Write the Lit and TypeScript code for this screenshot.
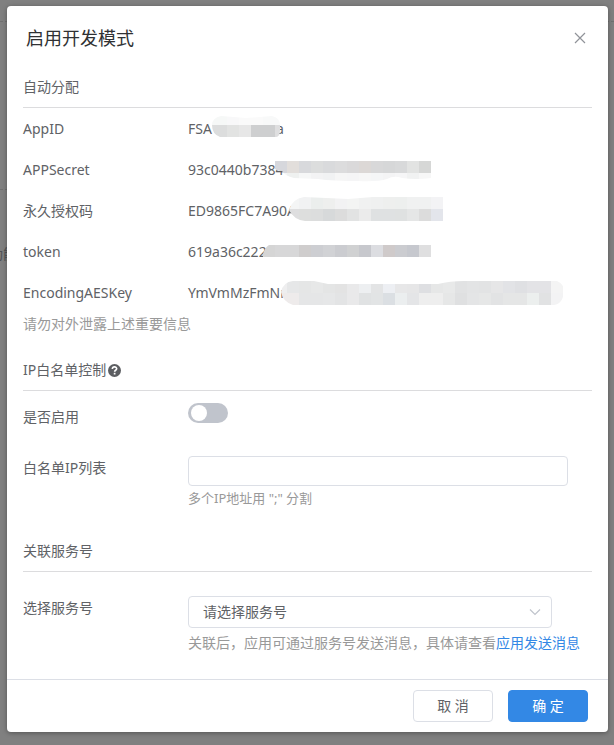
import { LitElement, html, css, svg } from "lit";
import { customElement, property, state } from "lit/decorators.js";

interface Mask {
  x: number;
  y: number;
  path: string;
  rows: string[][];
}

interface Credential {
  name: string;
  head: string;
  tail?: string;
  mask: Mask;
}

const CELL = 12;

const CREDENTIALS: Credential[] = [
  {
    name: "AppID",
    head: "FSA1",
    tail: "a",
    mask: {
      x: 15,
      y: 5,
      path: "M24 17Q24 10 33 8Q46 9 58 10L84 8Q92 10 92 17V22Q92 29 88 29H32Q24 26 24 17Z",
      rows: [
        ["#f6f8f7", "#f6f8f7", "#f8f8f9", "#fafafa", "#fafafa", "#f8f9f9", "#f8f9f9"],
        ["#dcdddd", "#dcdddd", "#e2e3e2", "#e7e7e7", "#cecfd0", "#cecfd0", "#dededf"],
      ],
    },
  },
  {
    name: "APPSecret",
    head: "93c0440b7384",
    mask: {
      x: 87,
      y: 12,
      path: "M87 12H243V29Q228 31 214 29Q206 26 199 30Q190 33 170 32Q145 32 130 30L106 29Q97 27 94 22Q87 22 86 18Z",
      rows: [
        ["#d6d7dc", "#e2dedb", "#d8d9dc", "#dcdddd", "#d9dadc", "#dcdcdd", "#dad9da", "#dcd8d6", "#d8d8d9", "#d6d7d8", "#d8d9da", "#e2e3e2", "#d6d7d6"],
        ["#f5f5f5", "#eff1f0", "#f6f7f7", "#f3f3f4", "#f1f2f3", "#f6f6f6", "#f5f5f6", "#f7f7f7", "#f5f6f7", "#f4f4f5", "#f6f6f7", "#f1f2f2", "#f7f7f7"],
      ],
    },
  },
  {
    name: "永久授权码",
    head: "ED9865FC7A90A",
    mask: {
      x: 99,
      y: 7,
      path: "M101 20Q104 9 116 7L160 9L185 7H255V31H117Q106 30 101 20Z",
      rows: [
        ["#f4f5f5", "#f1f2f3", "#ebeeed", "#eeefee", "#f2f2f3", "#f3f4f3", "#f0f1f1", "#eff0f0", "#eeefee", "#edefee", "#f0f1f1", "#f0f1f1", "#f3f3f5"],
        ["#dededf", "#dddedd", "#dcdddd", "#d7d9da", "#dcdcdc", "#e2e3e3", "#ebebeb", "#dfe1e2", "#dfe1e2", "#dfe1e1", "#e5e6e6", "#dcdcdc", "#e3e5eb"],
      ],
    },
  },
  {
    name: "token",
    head: "619a36c2222",
    mask: {
      x: 75,
      y: 14,
      path: "M81 14H243V26H74Q76 17 81 14Z",
      rows: [
        ["#d5d5d5", "#d7d7d8", "#d7d7d8", "#cfcdcd", "#cdced2", "#d1d2d5", "#cbccd0", "#d0d1d2", "#c7c8cd", "#dcdde1", "#cfcaca", "#cbccd0", "#c6c8ce", "#dfdfe0"],
      ],
    },
  },
  {
    name: "EncodingAESKey",
    head: "YmVmMzFmNm",
    mask: {
      x: 87,
      y: 9,
      path: "M93 20Q95 10 105 9H126L140 12H250Q262 9 276 9H369Q376 12 376 19Q375 32 366 33H105Q95 30 93 20Z",
      rows: [
        ["#eeeeef", "#e6e7e8", "#e5e6e6", "#e7e8e8", "#e4e5e5", "#e3e3e3", "#e9e9ea", "#edeff1", "#e3e4e5", "#edeff3", "#e7e7e8", "#e6e6e7", "#dedfe2", "#e6e7e7", "#e8e9e9", "#e1e2e3", "#e3e4e5", "#e2e3e4", "#e6e6e7", "#e2e3e6", "#dfe0e3", "#e3e3e6", "#e3e3e6", "#f4f4f4"],
        ["#eeebeb", "#eeebeb", "#e5e6e7", "#e5e6e7", "#e6e7e8", "#e3e4e5", "#e9e9ea", "#e0e2e3", "#e2e4e5", "#dbdfe3", "#ebeeef", "#e4e5e7", "#eeeeee", "#eeeeee", "#e6e7e7", "#dfe0e1", "#e4e5e6", "#e6e7e7", "#e2e3e4", "#e5e6e6", "#e5e6e6", "#ecefee", "#e1e2e3", "#f3f3f4"],
      ],
    },
  },
];

@customElement("masked-value")
export class MaskedValue extends LitElement {
  @property({ attribute: false }) item!: Credential;

  static styles = css`
    :host {
      position: relative;
      display: flex;
      align-items: center;
    }
    .head {
      min-width: 88px;
    }
    .mask {
      position: absolute;
      left: 0;
      top: 0;
      width: 380px;
      height: 41px;
    }
  `;

  render() {
    const { head, tail, mask } = this.item;
    return html`
      <span class="head">${head}</span>${tail ? html`<span>${tail}</span>` : null}
      <svg class="mask" viewBox="0 0 380 41" aria-hidden="true" shape-rendering="crispEdges">
        <clipPath id="shape"><path d=${mask.path}></path></clipPath>
        <g clip-path="url(#shape)">
          ${mask.rows.map((row, r) =>
            row.map(
              (fill, c) => svg`<rect x=${mask.x + c * CELL} y=${mask.y + r * CELL}
                width=${CELL} height=${CELL} fill=${fill}></rect>`
            )
          )}
        </g>
      </svg>
    `;
  }
}

@customElement("app-root")
export class AppRoot extends LitElement {
  @state() private enabled = false;

  static styles = css`
    :host {
      display: block;
      position: relative;
      overflow: hidden;
      min-height: 100vh;
      box-sizing: border-box;
      padding: 6px 6px 13px 7px;
      background: #808080;
      color: #606266;
      font: 14px/20px "Noto Sans", "Noto Sans CJK SC", sans-serif;
    }
    * {
      box-sizing: border-box;
    }
    .page {
      position: absolute;
      inset: 0;
    }
    .rule {
      position: absolute;
      left: 0;
      right: 0;
      top: 21px;
      border-top: 1px dashed #707070;
    }
    .rule.second {
      top: 189px;
      right: 50%;
    }
    .behind {
      position: absolute;
      left: -11px;
      top: 244px;
      color: #505153;
    }
    .dialog {
      position: relative;
      background: #fff;
      border-radius: 4px;
      box-shadow: 0 1px 5px rgba(0, 0, 0, 0.35);
    }
    header {
      display: flex;
      align-items: center;
      justify-content: space-between;
      height: 64px;
      padding: 0 20px 0 19px;
    }
    h1 {
      margin: 0;
      font-size: 18px;
      line-height: 24px;
      font-weight: 400;
      color: #303133;
    }
    button {
      font: inherit;
      cursor: pointer;
    }
    .close {
      display: flex;
      padding: 0;
      border: 0;
      background: none;
      color: #909399;
    }
    .body {
      padding: 0 16px;
    }
    h2 {
      display: flex;
      align-items: center;
      gap: 2px;
      margin: 0;
      height: 38px;
      padding-bottom: 3px;
      border-bottom: 1px solid #dcdcde;
      font-size: 14px;
      line-height: 20px;
      font-weight: 400;
    }
    dl {
      margin: 0;
    }
    .row {
      display: grid;
      grid-template-columns: 165px 1fr;
    }
    dl .row {
      height: 41px;
      align-items: center;
    }
    dl masked-value {
      height: 41px;
    }
    dd {
      margin: 0;
    }
    .note {
      margin: 0;
      color: #999;
      line-height: 22px;
    }
    .first {
      margin-bottom: 18px;
    }
    .second-group {
      margin-bottom: 24px;
    }
    .toggle-row {
      padding: 12px 0 29px;
    }
    .toggle-row label {
      padding-top: 4px;
    }
    .switch {
      appearance: none;
      display: flex;
      align-items: center;
      width: 40px;
      height: 20px;
      margin: 0;
      padding: 0 3px;
      border-radius: 10px;
      background: #c0c4cc;
      cursor: pointer;
    }
    .switch::before {
      content: "";
      width: 16px;
      height: 16px;
      border-radius: 50%;
      background: #fff;
    }
    .switch:checked {
      justify-content: flex-end;
      background: #3388e5;
    }
    .ip-row label,
    .account-row label {
      padding-top: 2px;
    }
    .field {
      display: block;
      width: 380px;
      max-width: 100%;
      height: 30px;
      padding: 0 14px;
      border: 1px solid #dcdfe6;
      border-radius: 4px;
      background: #fff;
      color: #606266;
      font: inherit;
      outline: none;
    }
    .hint {
      margin: 0;
      color: #999;
      line-height: 24px;
    }
    .hint.small {
      font-size: 13px;
    }
    .account-row {
      padding: 24px 0;
    }
    .select {
      position: relative;
      width: 364px;
      max-width: 100%;
      margin-bottom: 3px;
    }
    .select .field {
      appearance: none;
      width: 100%;
      height: 32px;
    }
    .arrow {
      position: absolute;
      right: 11px;
      top: 10px;
      pointer-events: none;
    }
    a {
      color: #3388e5;
      text-decoration: none;
    }
    footer {
      display: flex;
      justify-content: flex-end;
      gap: 15px;
      padding: 10px 20px;
      border-top: 1px solid #dcdfe6;
    }
    footer button {
      width: 80px;
      height: 32px;
      padding: 0;
      border: 1px solid #dcdfe6;
      border-radius: 4px;
      background: #fff;
      color: #606266;
    }
    footer .primary {
      border-color: #3388e5;
      background: #3388e5;
      color: #fff;
    }
  `;

  render() {
    return html`
      <div class="page" aria-hidden="true">
        <div class="rule"></div>
        <div class="rule second"></div>
        <span class="behind">功能</span>
      </div>
      <div class="dialog" role="dialog" aria-labelledby="title">
        <header>
          <h1 id="title">启用开发模式</h1>
          <button class="close" aria-label="关闭">
            <svg width="16" height="16" viewBox="0 0 16 16" fill="none" stroke="currentColor" stroke-width="1.2">
              <path d="M3 3L13 13M13 3L3 13"></path>
            </svg>
          </button>
        </header>
        <div class="body">
          <section class="first">
            <h2>自动分配</h2>
            <dl>
              ${CREDENTIALS.map(
                (item) => html`<div class="row">
                  <dt>${item.name}</dt>
                  <dd><masked-value .item=${item}></masked-value></dd>
                </div>`
              )}
            </dl>
            <p class="note">请勿对外泄露上述重要信息</p>
          </section>
          <section class="second-group">
            <h2>
              IP白名单控制
              <svg width="13" height="13" viewBox="0 0 12 12" aria-hidden="true">
                <circle cx="6" cy="6" r="6" fill="#5c5e62"></circle>
                <path d="M4 4.6C4.1 2 8 2 8 4.4C8 5.8 6.1 5.7 6.1 7.2" fill="none" stroke="#fff" stroke-width="1.5"></path>
                <rect x="5.3" y="8.1" width="1.6" height="1.6" fill="#fff"></rect>
              </svg>
            </h2>
            <div class="row toggle-row">
              <label for="enabled">是否启用</label>
              <input
                id="enabled"
                class="switch"
                type="checkbox"
                role="switch"
                .checked=${this.enabled}
                @change=${(e: Event) => (this.enabled = (e.target as HTMLInputElement).checked)}
              />
            </div>
            <div class="row ip-row">
              <label for="ips">白名单IP列表</label>
              <div>
                <input id="ips" class="field" type="text" />
                <p class="hint small">多个IP地址用 ";" 分割</p>
              </div>
            </div>
          </section>
          <section>
            <h2>关联服务号</h2>
            <div class="row account-row">
              <label for="account">选择服务号</label>
              <div>
                <div class="select">
                  <select id="account" class="field">
                    <option>请选择服务号</option>
                  </select>
                  <svg class="arrow" width="12" height="12" viewBox="0 0 12 12" fill="none" stroke="#c0c4cc" stroke-width="1.2" aria-hidden="true">
                    <path d="M1 3.5L6 8.5L11 3.5"></path>
                  </svg>
                </div>
                <p class="hint">关联后，应用可通过服务号发送消息，具体请查看<a href="#">应用发送消息</a></p>
              </div>
            </div>
          </section>
        </div>
        <footer>
          <button>取 消</button>
          <button class="primary">确 定</button>
        </footer>
      </div>
    `;
  }
}
